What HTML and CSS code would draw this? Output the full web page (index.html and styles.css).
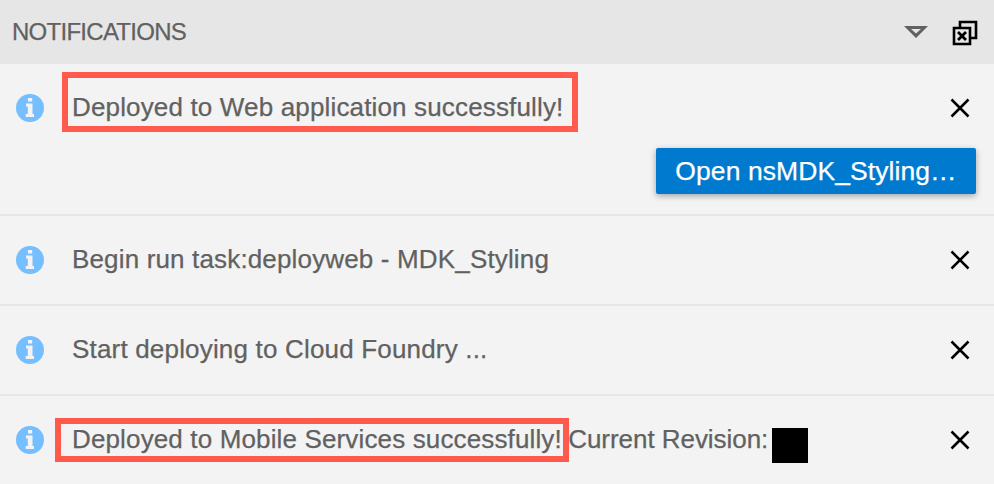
FILE: index.html
```html
<!DOCTYPE html>
<html lang="en">
<head>
<meta charset="utf-8">
<title>Notifications</title>
<link rel="stylesheet" href="styles.css">
</head>
<body>
<svg class="defs" width="0" height="0">
<symbol id="info" viewBox="0 0 28 28"><circle cx="14" cy="14" r="14" fill="#75beff"/><path fill="#f3f3f3" d="M12 4h4.200v3.500h-4.200zM10 9.500h6.500v10.500h1.500v3h-8.300v-3h2.100v-7.500h-1.800z"/></symbol>
<symbol id="close" viewBox="0 0 20 20"><path d="M1.500 1.500l17 17M18.500 1.500l-17 17" stroke="#000" stroke-width="2.500"/></symbol>
</svg>
<main class="panel">
<header class="header">
<h1 class="title">NOTIFICATIONS</h1>
<svg class="collapse" width="24" height="14" viewBox="0 0 24 14"><path d="M0 1h24l-12 12zM7 4l5 4.500 5-4.500z" fill="#616161" fill-rule="evenodd"/></svg>
<svg class="clear" width="26" height="26" viewBox="0 0 26 26"><path d="M8 7V2h16v16h-5M2 8h16v16H2z" fill="none" stroke="#000" stroke-width="2.600"/><path d="M6 12l8 8M14 12l-8 8" stroke="#000" stroke-width="2.800"/></svg>
</header>
<section class="item first">
<svg class="info"><use href="#info"/></svg>
<p class="message"><span class="mark web">Deployed to Web application successfully!</span></p>
<svg class="close"><use href="#close"/></svg>
<button class="action">Open nsMDK_Styling…</button>
</section>
<section class="item"><svg class="info"><use href="#info"/></svg><p class="message">Begin run task:deployweb - MDK_Styling</p><svg class="close"><use href="#close"/></svg></section>
<section class="item"><svg class="info"><use href="#info"/></svg><p class="message start">Start deploying to Cloud Foundry ...</p><svg class="close"><use href="#close"/></svg></section>
<section class="item"><svg class="info"><use href="#info"/></svg><p class="message revision"><span class="mark mobile">Deployed to Mobile Services successfully!</span><span class="label">Current Revision:</span><span class="redacted"></span></p><svg class="close"><use href="#close"/></svg></section>
</main>
</body>
</html>
```
FILE: styles.css
```css
* { box-sizing: border-box; }
body { margin: 0; font-family: "Liberation Sans", Arial, sans-serif; color: #616161; background: #f3f3f3; overflow: hidden; }
.defs { position: absolute; }
.panel { width: 994px; height: 484px; overflow: hidden; }
.header { height: 64px; background: #e6e6e6; display: flex; align-items: center; padding: 0 16px 0 12px; }
.title { margin: 0; flex: 1; font-size: 24px; font-weight: 400; letter-spacing: -.73px; -webkit-text-stroke: .25px; }
.collapse { margin-right: 24px; }
.clear { margin-top: 2px; }
.item { height: 90px; display: grid; grid-template-columns: 28px 1fr 20px; column-gap: 28px; grid-template-rows: 88px; align-items: center; padding: 0 24px 0 16px; border-bottom: 2px solid #e6e6e6; }
.item.first { height: 152px; grid-template-rows: 88px 38px; }
.info { width: 28px; height: 28px; }
.close { width: 20px; height: 20px; }
.message { margin: -2px 0 0; font-size: 26px; line-height: 30px; letter-spacing: .155px; white-space: nowrap; -webkit-text-stroke: .25px; }
.start { letter-spacing: .18px; }
.mark { position: relative; }
.mark::after { content: ""; position: absolute; border: 6px solid #ff5a4c; }
.web::after { inset: -20px -14.600px -10px -10px; }
.mobile { letter-spacing: .14px; }
.mobile::after { inset: -6px -7.200px -8px -17px; }
.revision { display: flex; height: 30px; }
.label { margin-left: 6.400px; letter-spacing: -.05px; }
.redacted { flex: none; width: 36px; height: 35px; margin: 4px 0 0 4px; background: #000; }
.action { grid-column: 1 / -1; justify-self: end; width: 320px; height: 46px; margin-right: -6px; padding: 0; border: 0; border-radius: 2px; background: #007acf; color: #fff; font: 26.500px "Liberation Sans", Arial, sans-serif; letter-spacing: .08px; -webkit-text-stroke: .25px; box-shadow: 0 2px 6px #0005; }
```
